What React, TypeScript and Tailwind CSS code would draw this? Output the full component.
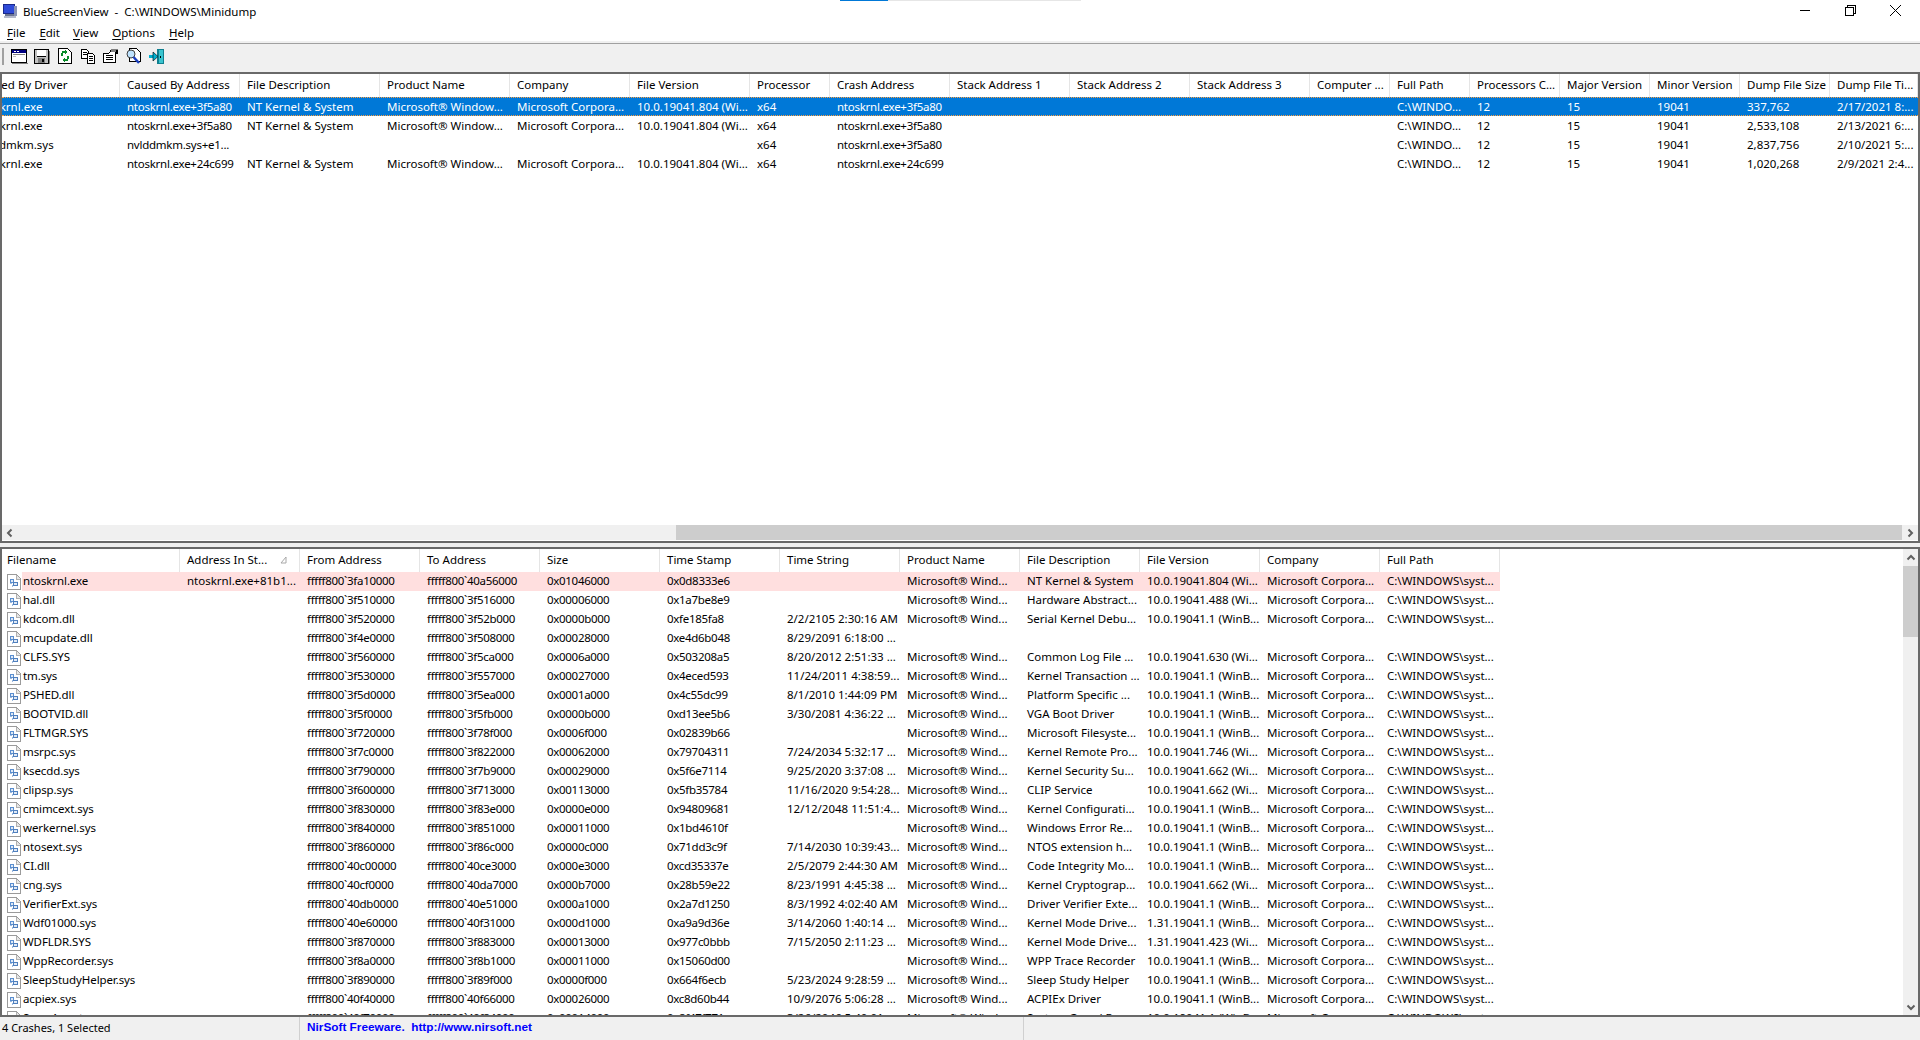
import React from "react";

const TOP_COLS = "grid-cols-[118px_120px_140px_130px_120px_120px_80px_120px_120px_120px_120px_80px_80px_90px_90px_90px_90px_88px]";
const BOT_COLS = "grid-cols-[178px_120px_120px_120px_120px_120px_120px_120px_120px_120px_120px_120px]";

const topHeaders = ["Caused By Driver", "Caused By Address", "File Description", "Product Name", "Company", "File Version", "Processor", "Crash Address", "Stack Address 1", "Stack Address 2", "Stack Address 3", "Computer ...", "Full Path", "Processors C...", "Major Version", "Minor Version", "Dump File Size", "Dump File Ti..."];
const botHeaders = ["Filename", "Address In St...", "From Address", "To Address", "Size", "Time Stamp", "Time String", "Product Name", "File Description", "File Version", "Company", "Full Path"];

const MS = "Microsoft® Window...";
const CO = "Microsoft Corpora...";
const topRows = [
  ["ntoskrnl.exe", "ntoskrnl.exe+3f5a80", "NT Kernel & System", MS, CO, "10.0.19041.804 (Wi...", "x64", "ntoskrnl.exe+3f5a80", "", "", "", "", "C:\\WINDO...", "12", "15", "19041", "337,762", "2/17/2021 8:..."],
  ["ntoskrnl.exe", "ntoskrnl.exe+3f5a80", "NT Kernel & System", MS, CO, "10.0.19041.804 (Wi...", "x64", "ntoskrnl.exe+3f5a80", "", "", "", "", "C:\\WINDO...", "12", "15", "19041", "2,533,108", "2/13/2021 6:..."],
  ["nvlddmkm.sys", "nvlddmkm.sys+e1...", "", "", "", "", "x64", "ntoskrnl.exe+3f5a80", "", "", "", "", "C:\\WINDO...", "12", "15", "19041", "2,837,756", "2/10/2021 5:..."],
  ["ntoskrnl.exe", "ntoskrnl.exe+24c699", "NT Kernel & System", MS, CO, "10.0.19041.804 (Wi...", "x64", "ntoskrnl.exe+24c699", "", "", "", "", "C:\\WINDO...", "12", "15", "19041", "1,020,268", "2/9/2021 2:4..."],
];

const W1 = "10.0.19041.1 (WinB...";
const row = (name: string, addr: string, from: string, to: string, size: string, stamp: string, time: string, desc: string, ver: string) =>
  [name, addr, from, to, size, stamp, time, desc ? "Microsoft® Wind..." : "", desc, ver, desc ? CO : "", desc ? "C:\\WINDOWS\\syst..." : ""];
const a = (s: string) => "fffff800`" + s;
const botRows = [
  row("ntoskrnl.exe", "ntoskrnl.exe+81b1...", a("3fa10000"), a("40a56000"), "0x01046000", "0x0d8333e6", "", "NT Kernel & System", "10.0.19041.804 (Wi..."),
  row("hal.dll", "", a("3f510000"), a("3f516000"), "0x00006000", "0x1a7be8e9", "", "Hardware Abstract...", "10.0.19041.488 (Wi..."),
  row("kdcom.dll", "", a("3f520000"), a("3f52b000"), "0x0000b000", "0xfe185fa8", "2/2/2105 2:30:16 AM", "Serial Kernel Debu...", W1),
  row("mcupdate.dll", "", a("3f4e0000"), a("3f508000"), "0x00028000", "0xe4d6b048", "8/29/2091 6:18:00 ...", "", ""),
  row("CLFS.SYS", "", a("3f560000"), a("3f5ca000"), "0x0006a000", "0x503208a5", "8/20/2012 2:51:33 ...", "Common Log File ...", "10.0.19041.630 (Wi..."),
  row("tm.sys", "", a("3f530000"), a("3f557000"), "0x00027000", "0x4eced593", "11/24/2011 4:38:59...", "Kernel Transaction ...", W1),
  row("PSHED.dll", "", a("3f5d0000"), a("3f5ea000"), "0x0001a000", "0x4c55dc99", "8/1/2010 1:44:09 PM", "Platform Specific ...", W1),
  row("BOOTVID.dll", "", a("3f5f0000"), a("3f5fb000"), "0x0000b000", "0xd13ee5b6", "3/30/2081 4:36:22 ...", "VGA Boot Driver", W1),
  row("FLTMGR.SYS", "", a("3f720000"), a("3f78f000"), "0x0006f000", "0x02839b66", "", "Microsoft Filesyste...", W1),
  row("msrpc.sys", "", a("3f7c0000"), a("3f822000"), "0x00062000", "0x79704311", "7/24/2034 5:32:17 ...", "Kernel Remote Pro...", "10.0.19041.746 (Wi..."),
  row("ksecdd.sys", "", a("3f790000"), a("3f7b9000"), "0x00029000", "0x5f6e7114", "9/25/2020 3:37:08 ...", "Kernel Security Su...", "10.0.19041.662 (Wi..."),
  row("clipsp.sys", "", a("3f600000"), a("3f713000"), "0x00113000", "0x5fb35784", "11/16/2020 9:54:28...", "CLIP Service", "10.0.19041.662 (Wi..."),
  row("cmimcext.sys", "", a("3f830000"), a("3f83e000"), "0x0000e000", "0x94809681", "12/12/2048 11:51:4...", "Kernel Configurati...", W1),
  row("werkernel.sys", "", a("3f840000"), a("3f851000"), "0x00011000", "0x1bd4610f", "", "Windows Error Re...", W1),
  row("ntosext.sys", "", a("3f860000"), a("3f86c000"), "0x0000c000", "0x71dd3c9f", "7/14/2030 10:39:43...", "NTOS extension h...", W1),
  row("CI.dll", "", a("40c00000"), a("40ce3000"), "0x000e3000", "0xcd35337e", "2/5/2079 2:44:30 AM", "Code Integrity Mo...", W1),
  row("cng.sys", "", a("40cf0000"), a("40da7000"), "0x000b7000", "0x28b59e22", "8/23/1991 4:45:38 ...", "Kernel Cryptograp...", "10.0.19041.662 (Wi..."),
  row("VerifierExt.sys", "", a("40db0000"), a("40e51000"), "0x000a1000", "0x2a7d1250", "8/3/1992 4:02:40 AM", "Driver Verifier Exte...", W1),
  row("Wdf01000.sys", "", a("40e60000"), a("40f31000"), "0x000d1000", "0xa9a9d36e", "3/14/2060 1:40:14 ...", "Kernel Mode Drive...", "1.31.19041.1 (WinB..."),
  row("WDFLDR.SYS", "", a("3f870000"), a("3f883000"), "0x00013000", "0x977c0bbb", "7/15/2050 2:11:23 ...", "Kernel Mode Drive...", "1.31.19041.423 (Wi..."),
  row("WppRecorder.sys", "", a("3f8a0000"), a("3f8b1000"), "0x00011000", "0x15060d00", "", "WPP Trace Recorder", W1),
  row("SleepStudyHelper.sys", "", a("3f890000"), a("3f89f000"), "0x0000f000", "0x664f6ecb", "5/23/2024 9:28:59 ...", "Sleep Study Helper", W1),
  row("acpiex.sys", "", a("40f40000"), a("40f66000"), "0x00026000", "0xc8d60b44", "10/9/2076 5:06:28 ...", "ACPIEx Driver", W1),
  row("SgrmAgent.sys", "", a("40f70000"), a("40f84000"), "0x00014000", "0x8f47f771", "3/26/2046 5:40:01 ...", "System Guard Run...", W1),
];

function AppIcon() {
  return (
    <svg width="16" height="16" viewBox="0 0 16 16" shapeRendering="crispEdges">
      <rect x="1" y="1" width="12" height="10" fill="#1b2a8c" />
      <rect x="2" y="2" width="10" height="8" fill="#2f4bd8" />
      <rect x="12" y="3" width="3" height="10" fill="#8a93b5" />
      <rect x="3" y="11" width="9" height="2" fill="#6d7590" />
      <rect x="2" y="13" width="12" height="2" fill="#b5bacb" />
    </svg>
  );
}

function FileIcon() {
  return (
    <svg width="14" height="16" viewBox="0 0 14 16" shapeRendering="crispEdges" className="shrink-0">
      <path d="M1 0.5H9.5L13.5 4.5V15.5H0.5V0.5Z" fill="#ffffff" stroke="#9a9a9a" />
      <path d="M9 1V5H13" fill="#e6e6e6" stroke="#b0b0b0" />
      <rect x="3" y="5" width="4" height="4" fill="#5b8fd0" />
      <rect x="4" y="6" width="2" height="2" fill="#dfe9f6" />
      <rect x="6" y="8" width="5" height="4" fill="#4f7fbd" />
      <rect x="7" y="9" width="3" height="2" fill="#dfe9f6" />
      <rect x="3" y="9" width="2" height="1" fill="#9ab8de" />
      <rect x="5" y="11" width="1" height="2" fill="#9ab8de" />
    </svg>
  );
}

function ToolIcon({ kind }: { kind: number }) {
  const common = { width: 18, height: 17, viewBox: "0 0 18 17", shapeRendering: "crispEdges" as const };
  if (kind === 0)
    return (
      <svg {...common}>
        <rect x="1.5" y="1.5" width="15" height="13" fill="#fff" stroke="#000" />
        <rect x="2" y="2" width="14" height="3" fill="#000080" />
        <rect x="4" y="3" width="2" height="1" fill="#fff" />
        <rect x="7" y="3" width="2" height="1" fill="#fff" />
        <rect x="3" y="6" width="12" height="1" fill="#808080" />
        <rect x="3" y="8" width="3" height="1" fill="#c0c0c0" />
        <rect x="2" y="15" width="16" height="1" fill="#808080" />
      </svg>
    );
  if (kind === 1)
    return (
      <svg {...common}>
        <rect x="1.5" y="1.5" width="14" height="14" fill="#c0c0c0" stroke="#000" />
        <rect x="4" y="2" width="9" height="6" fill="#fff" />
        <rect x="4" y="8" width="9" height="1" fill="#000" />
        <rect x="5" y="10" width="7" height="5" fill="#808080" />
        <rect x="9" y="11" width="2" height="3" fill="#000" />
        <rect x="16" y="3" width="1" height="13" fill="#808080" />
      </svg>
    );
  if (kind === 2)
    return (
      <svg {...common}>
        <path d="M2.5 0.5H11.5L15.5 4.5V15.5H2.5Z" fill="#fff" stroke="#000" />
        <rect x="6" y="3" width="5" height="2" fill="#0a8a2a" />
        <rect x="5" y="5" width="2" height="3" fill="#0a8a2a" />
        <rect x="9" y="2" width="1" height="4" fill="#0a8a2a" />
        <rect x="7" y="11" width="5" height="2" fill="#0a8a2a" />
        <rect x="11" y="8" width="2" height="3" fill="#0a8a2a" />
        <rect x="8" y="10" width="1" height="4" fill="#0a8a2a" />
      </svg>
    );
  if (kind === 3)
    return (
      <svg {...common}>
        <path d="M2.5 1.5H7.5L9.5 3.5V10.5H2.5Z" fill="#fff" stroke="#000" />
        <rect x="4" y="4" width="4" height="1" fill="#000" />
        <rect x="4" y="6" width="4" height="1" fill="#000" />
        <path d="M8.5 5.5H13.5L15.5 7.5V15.5H8.5Z" fill="#fff" stroke="#000" />
        <rect x="10" y="8" width="4" height="1" fill="#000" />
        <rect x="10" y="10" width="4" height="1" fill="#000" />
        <rect x="10" y="12" width="4" height="1" fill="#000" />
      </svg>
    );
  if (kind === 4)
    return (
      <svg {...common}>
        <path d="M1.5 5.5L6.5 5.5L9 2.5H13.5V14.5H1.5Z" fill="#fff" stroke="#000" />
        <rect x="4" y="7" width="7" height="1" fill="#000" />
        <rect x="4" y="9" width="7" height="1" fill="#000" />
        <rect x="4" y="11" width="7" height="1" fill="#000" />
        <rect x="9" y="1" width="7" height="3" fill="#808080" />
        <rect x="14" y="2" width="2" height="4" fill="#000" />
      </svg>
    );
  if (kind === 5)
    return (
      <svg {...common}>
        <path d="M4.5 0.5H11.5L15.5 4.5V13.5H4.5Z" fill="#fff" stroke="#000" />
        <circle cx="6" cy="6" r="4" fill="#bfe3ff" stroke="#404040" shapeRendering="auto" />
        <path d="M8.5 9 14 15" stroke="#1a3fc0" strokeWidth="2.5" shapeRendering="auto" />
      </svg>
    );
  return (
    <svg {...common}>
      <rect x="9" y="1" width="7" height="15" fill="#0f7f8f" />
      <rect x="11" y="2" width="4" height="13" fill="#39c4cf" />
      <rect x="12" y="8" width="1" height="2" fill="#000" />
      <rect x="1" y="7" width="5" height="3" fill="#00b0d0" />
      <path d="M5 4 10 8.5 5 13Z" fill="#00b0d0" stroke="#000" strokeWidth="0.6" shapeRendering="auto" />
    </svg>
  );
}

function Chevron({ dir }: { dir: "l" | "r" | "u" | "d" }) {
  const d = { l: "M6.5 1.5 3 5 6.5 8.5", r: "M3.5 1.5 7 5 3.5 8.5", u: "M1.5 6.5 5 3 8.5 6.5", d: "M1.5 3.5 5 7 8.5 3.5" }[dir];
  return (
    <svg width="10" height="10" viewBox="0 0 10 10" fill="none" stroke="#606060" strokeWidth="2">
      <path d={d} />
    </svg>
  );
}

function Menu({ k, rest, cls }: { k: string; rest: string; cls: string }) {
  return (
    <span className={cls}>
      <span className="underline underline-offset-2">{k}</span>
      {rest}
    </span>
  );
}

export default function App() {
  return (
    <div className="relative flex flex-col h-[1040px] w-[1920px] overflow-hidden bg-[#f0f0f0] font-['Noto_Sans','sans-serif'] text-[11.5px] text-black">
      <div className="absolute left-[840px] top-0 h-px w-[48px] bg-[#0078d7]" />
      <div className="absolute left-[888px] top-0 h-px w-[193px] bg-[#e6e6e6]" />

      <div className="flex h-[22px] items-center bg-white pl-[2px]">
        <AppIcon />
        <span className="ml-[5px] whitespace-pre pt-[2px]">BlueScreenView  -  C:\WINDOWS\Minidump</span>
        <div className="ml-auto flex items-center">
          <svg width="120" height="22" viewBox="0 0 120 22" fill="none" stroke="#000" shapeRendering="crispEdges">
            <path d="M0 10.5H10" />
            <path d="M45.5 7.5H53.5V15.5H45.5ZM47.5 7.5V5.5H55.5V13.5H53.5" />
            <path d="M90 5 101 16M101 5 90 16" shapeRendering="auto" />
          </svg>
        </div>
      </div>

      <div className="flex h-[19px] items-center bg-white pt-[2px]">
        <Menu k="F" rest="ile" cls="ml-[7px]" />
        <Menu k="E" rest="dit" cls="ml-[14px]" />
        <Menu k="V" rest="iew" cls="ml-[13px]" />
        <Menu k="O" rest="ptions" cls="ml-[14px]" />
        <Menu k="H" rest="elp" cls="ml-[14px]" />
      </div>
      <div className="h-[2px] bg-[#f0f0f0]" />
      <div className="h-px bg-[#a0a0a0]" />

      <div className="flex h-[28px] items-center gap-[5px] bg-[#f0f0f0] pb-[3px] pl-[2px]">
        <div className="mr-px h-[17px] w-[2px] bg-[#a0a0a0]" />
        {[0, 1, 2, 3, 4, 5, 6].map((k) => (
          <ToolIcon key={k} kind={k} />
        ))}
      </div>

      <div className="flex h-[471px] flex-col border-2 border-[#696969] bg-white">
        <div className={`grid h-[23px] shrink-0 ${TOP_COLS}`}>
          {topHeaders.map((h, i) => (
            <div key={h} className="flex items-center overflow-hidden whitespace-nowrap border-r border-[#e5e5e5] pb-[2px] pl-[7px] first:pl-0">
              <span className={i === 0 ? "ml-[-27px]" : ""}>{h}</span>
            </div>
          ))}
        </div>
        {topRows.map((r, ri) => (
          <div
            key={ri}
            className={`grid h-[19px] shrink-0 ${TOP_COLS} ${ri === 0 ? "border-y border-dotted border-[#ffa040] bg-[#0078d7] text-white" : ""}`}
          >
            {r.map((c, i) => (
              <div key={i} className={`flex items-center overflow-hidden whitespace-nowrap pl-[7px] first:pl-0 ${i === 1 || i === 7 ? "tracking-[-0.25px]" : ""}`}>
                <span className={i === 0 ? "ml-[-26px]" : ""}>{c}</span>
              </div>
            ))}
          </div>
        ))}
        <div className="flex-1" />
        <div className="flex h-[15px] shrink-0 bg-[#f0f0f0]">
          <div className="flex w-[15px] items-center justify-center">
            <Chevron dir="l" />
          </div>
          <div className="w-[659px]" />
          <div className="flex-1 bg-[#cdcdcd]" />
          <div className="flex w-[16px] items-center justify-center">
            <Chevron dir="r" />
          </div>
        </div>
        <div className="h-px shrink-0" />
      </div>

      <div className="h-[4px] bg-[#f0f0f0]" />

      <div className="flex min-h-0 flex-1 border-2 border-[#696969] bg-white">
        <div className="min-w-0 flex-1 overflow-hidden">
          <div className={`relative grid h-[23px] w-[1498px] ${BOT_COLS}`}>
            {botHeaders.map((h) => (
              <div key={h} className="flex items-center overflow-hidden whitespace-nowrap border-r border-[#e5e5e5] pb-[2px] pl-[5px] [&:not(:first-child)]:pl-[7px]">
                {h}
              </div>
            ))}
            <svg width="7" height="8" viewBox="0 0 7 8" className="absolute left-[278px] top-[7px]" fill="none" stroke="#a8a8a8" strokeWidth="1">
              <path d="M1 7H6V1Z" />
            </svg>
          </div>
          {botRows.map((r, ri) => (
            <div key={ri} className={`grid h-[19px] w-[1498px] ${BOT_COLS}`}>
              {r.map((c, i) =>
                i === 0 ? (
                  <div key={i} className="flex items-center pl-[5px]">
                    <FileIcon />
                    <div className={`ml-px flex h-full flex-1 items-center overflow-hidden whitespace-nowrap pb-[2px] pl-px tracking-[-0.1px] ${ri === 0 ? "bg-[#ffdfdf]" : ""}`}>{c}</div>
                  </div>
                ) : (
                  <div key={i} className={`flex items-center overflow-hidden whitespace-nowrap pb-[2px] pl-[7px] ${i >= 2 && i <= 5 ? "tracking-[-0.3px]" : ""} ${ri === 0 ? "bg-[#ffdfdf]" : ""}`}>
                    {c}
                  </div>
                )
              )}
            </div>
          ))}
        </div>
        <div className="flex w-[15px] shrink-0 flex-col bg-[#f0f0f0]">
          <div className="flex h-[17px] items-center justify-center">
            <Chevron dir="u" />
          </div>
          <div className="h-[71px] bg-[#cdcdcd]" />
          <div className="flex-1" />
          <div className="flex h-[17px] items-center justify-center">
            <Chevron dir="d" />
          </div>
        </div>
      </div>

      <div className="flex h-[23px] bg-[#f0f0f0]">
        <div className="flex w-[300px] items-center border-r border-[#d0d0d0] pl-[2px] text-[11px]">4 Crashes, 1 Selected</div>
        <div className="w-[724px] border-r border-[#d0d0d0] pl-[7px]">
          <span className="whitespace-pre font-['Liberation_Sans','sans-serif'] text-[11.8px] font-bold leading-[20px] text-[#0000ff]">NirSoft Freeware.  http://www.nirsoft.net</span>
        </div>
      </div>
    </div>
  );
}
